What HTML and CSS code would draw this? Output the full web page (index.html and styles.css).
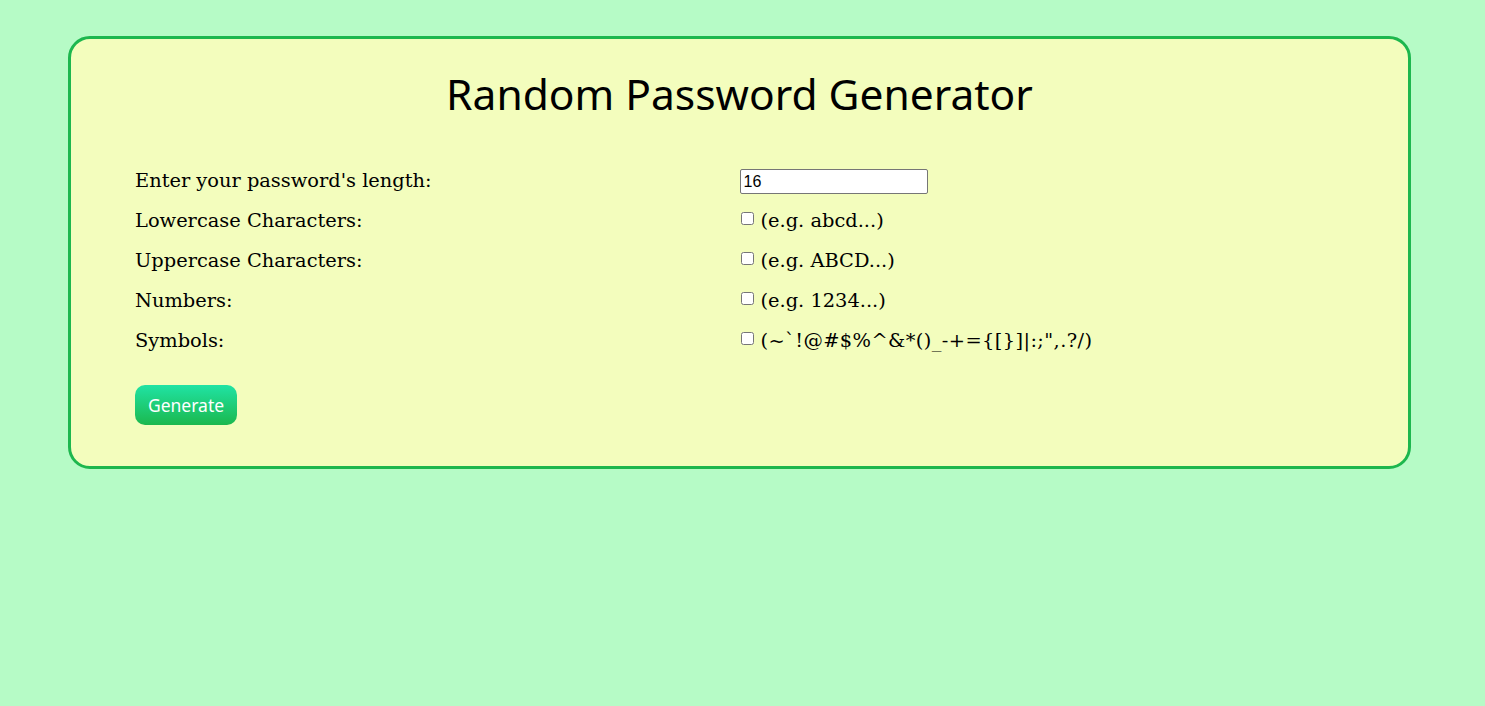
FILE: index.html
```html
<!DOCTYPE html>
<html lang="en">
<head>
<meta charset="utf-8">
<title>Random Password Generator</title>
<link rel="stylesheet" href="styles.css">
</head>
<body>
<main class="card">
  <h1 class="title">Random Password Generator</h1>
  <form class="options">
    <label class="label" for="len">Enter your password's length:</label>
    <div class="field"><input class="num" id="len" type="text" value="16"></div>
    <label class="label" for="lower">Lowercase Characters:</label>
    <div class="field"><input class="check" id="lower" type="checkbox"><span>(e.g. abcd...)</span></div>
    <label class="label" for="upper">Uppercase Characters:</label>
    <div class="field"><input class="check" id="upper" type="checkbox"><span>(e.g. ABCD...)</span></div>
    <label class="label" for="nums">Numbers:</label>
    <div class="field"><input class="check" id="nums" type="checkbox"><span>(e.g. 1234...)</span></div>
    <label class="label" for="syms">Symbols:</label>
    <div class="field"><input class="check" id="syms" type="checkbox"><span class="syms">(~`!@#$%^&amp;*()_-+={[}]|:;",.?/)</span></div>
  </form>
  <button class="btn" type="button">Generate</button>
</main>
</body>
</html>
```

FILE: styles.css
```css
html, body {
  margin: 0;
  padding: 0;
}
body {
  background: #b6fbc6;
  padding: 36px 74px 0 68px;
  font-family: "DejaVu Serif", "Liberation Serif", serif;
}
.card {
  box-sizing: border-box;
  width: 1343px;
  height: 433px;
  background: #f3fdbd;
  border: 3px solid #1db74e;
  border-radius: 22px;
  padding: 29px 64px 0 64px;
}
.title {
  margin: 0;
  text-align: center;
  font-family: "Noto Sans", "Open Sans", sans-serif;
  font-weight: 400;
  font-size: 42.5px;
  line-height: 52px;
  color: #000;
}
.options {
  display: grid;
  grid-template-columns: 1fr 1fr;
  grid-auto-rows: 40px;
  margin-top: 49px;
}
.label {
  font-size: 19.4px;
  line-height: 24px;
  color: #000;
}
.field {
  display: flex;
  align-items: flex-start;
  gap: 7px;
  font-size: 19.4px;
  line-height: 24px;
}
.syms {
  letter-spacing: 0.4px;
}
.num {
  box-sizing: border-box;
  width: 188px;
  height: 25px;
  margin: 0;
  border: 1px solid #767676;
  border-radius: 2px;
  padding: 1px 3px;
  font-family: "Liberation Sans", Arial, sans-serif;
  font-size: 16px;
  background: #fff;
}
.check {
  width: 13px;
  height: 13px;
  margin: 3px 0 0 1px;
}
.btn {
  margin-top: 16px;
  width: 102px;
  height: 40px;
  border: 0;
  border-radius: 10px;
  background: linear-gradient(#20e3a4, #1bb84e);
  color: #fff;
  font-family: "Noto Sans", "Open Sans", sans-serif;
  font-size: 17.5px;
  padding: 0;
}
```
